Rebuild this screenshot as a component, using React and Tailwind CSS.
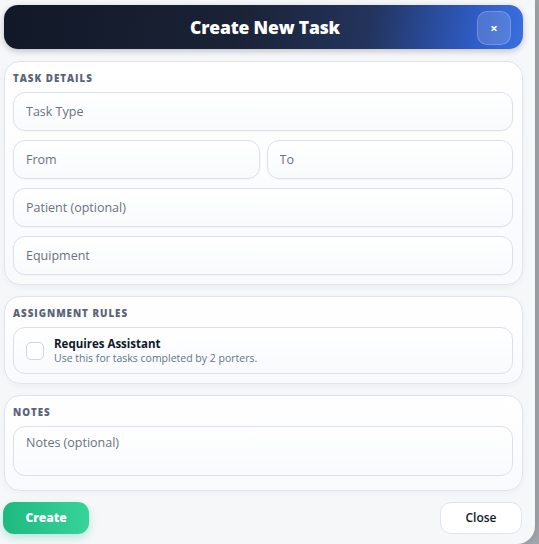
import { useState } from 'react'

const inputCls =
  'w-full h-[39px] px-[12px] rounded-[12px] border border-[#dbe1ec] bg-gradient-to-b from-white to-[#f8fafc] text-[12.5px] text-[#111827] placeholder:text-[#6b7280] outline-none shadow-[0_1px_2px_rgba(15,23,42,0.03)]'

function Section({ title, children, bottom = 'pb-[9px]' }) {
  return (
    <div className={`rounded-[16px] border border-[#dfe4ee] bg-gradient-to-b from-white to-[#f9fafc] pl-[8px] pr-[9px] pt-[11px] ${bottom} shadow-[0_2px_6px_rgba(15,23,42,0.04)]`}>
      <div className="text-[9.8px] leading-[12px] font-extrabold tracking-[0.1em] text-[#5b6477] uppercase mb-[7px]">
        {title}
      </div>
      {children}
    </div>
  )
}

export default function App() {
  const [task, setTask] = useState({ type: '', from: '', to: '', patient: '', equipment: '', notes: '' })
  const [assistant, setAssistant] = useState(false)

  const update = (field) => (e) => setTask(prev => ({ ...prev, [field]: e.target.value }))

  return (
    <div className="w-[539px] h-[544px] bg-[#a3a7ae] flex overflow-hidden" style={{ fontFamily: '"Open Sans", "Noto Sans", sans-serif' }}>
      <div className="w-[535px] h-[544px] shrink-0 bg-[#f6f7f9] rounded-br-[18px] pl-[4px] pr-[12px] pt-[5px] flex flex-col shadow-[2px_0_8px_rgba(0,0,0,0.12)]">
        {/* Header */}
        <div className="h-[44px] rounded-[14px] bg-[linear-gradient(100deg,#111827_0%,#1a2236_45%,#23345c_70%,#2f5bc4_90%,#3a6fe0_100%)] flex items-center justify-center relative shrink-0 shadow-[0_2px_6px_rgba(15,23,42,0.25)]">
          <h2 className="text-white text-[17.5px] font-extrabold tracking-[-0.01em] ml-[3px]">Create New Task</h2>
          <button className="absolute right-[12px] top-[6px] w-[34px] h-[34px] rounded-[10px] bg-white/15 border border-white/20 flex items-center justify-center text-white text-[13px] font-bold leading-none">
            ×
          </button>
        </div>

        <div className="mt-[12px] flex flex-col gap-[11px]">
          {/* Task details */}
          <Section title="Task Details">
            <div className="flex flex-col gap-[9px]">
              <input autoFocus className={inputCls} placeholder="Task Type" value={task.type} onChange={update('type')} />
              <div className="flex gap-[7px]">
                <input className={inputCls} placeholder="From" value={task.from} onChange={update('from')} />
                <input className={inputCls} placeholder="To" value={task.to} onChange={update('to')} />
              </div>
              <input className={inputCls} placeholder="Patient (optional)" value={task.patient} onChange={update('patient')} />
              <input className={inputCls} placeholder="Equipment" value={task.equipment} onChange={update('equipment')} />
            </div>
          </Section>

          {/* Assignment rules */}
          <Section title="Assignment Rules">
            <label className="h-[47px] rounded-[12px] border border-[#dbe1ec] bg-gradient-to-b from-white to-[#f8fafc] flex items-center gap-[10px] px-[12px] cursor-pointer">
              <input
                type="checkbox"
                checked={assistant}
                onChange={(e) => setAssistant(e.target.checked)}
                className="appearance-none w-[18px] h-[18px] rounded-[5px] border border-[#cfd6e2] bg-white shrink-0"
              />
              <div className="flex flex-col leading-none">
                <span className="text-[11.5px] font-bold text-[#0f172a]">Requires Assistant</span>
                <span className="text-[10.5px] text-[#64748b] mt-[3px]">Use this for tasks completed by 2 porters.</span>
              </div>
            </label>
          </Section>

          {/* Notes */}
          <Section title="Notes" bottom="pb-[14px]">
            <textarea
              className="w-full h-[50px] block px-[12px] pt-[7px] rounded-[12px] border border-[#dbe1ec] bg-gradient-to-b from-white to-[#f8fafc] text-[12.5px] text-[#111827] placeholder:text-[#6b7280] outline-none resize-none"
              placeholder="Notes (optional)"
              value={task.notes}
              onChange={update('notes')}
            />
          </Section>
        </div>

        {/* Actions */}
        <div className="mt-[11px] flex justify-between items-center">
          <button className="ml-[-1px] w-[86px] h-[32px] rounded-[11px] bg-gradient-to-r from-[#1db981] to-[#36d39b] text-white text-[12px] font-extrabold shadow-[0_4px_10px_rgba(16,185,129,0.25)]">
            Create
          </button>
          <button className="w-[82px] h-[32px] rounded-[11px] bg-white border border-[#dfe4ee] text-[#111827] text-[12px] font-semibold mr-[1px]">
            Close
          </button>
        </div>
      </div>
    </div>
  )
}
